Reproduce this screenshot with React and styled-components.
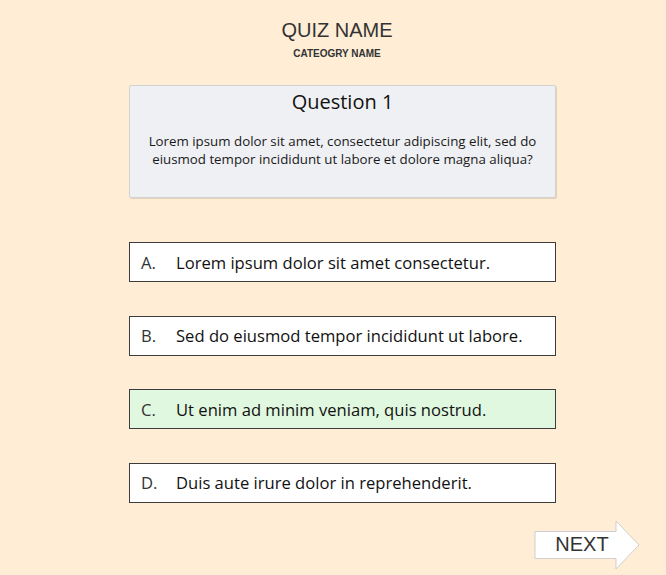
import React from 'react';
import styled, { createGlobalStyle } from 'styled-components';

const GlobalStyle = createGlobalStyle`
    html, body {
        margin: 0;
        padding: 0;
        background: #ffedd5;
    }
    body {
        font-family: 'Open Sans', 'Noto Sans', sans-serif;
        color: #1a1a1a;
    }
`;

const answers = [
    { letter: 'A.', text: 'Lorem ipsum dolor sit amet consectetur.' },
    { letter: 'B.', text: 'Sed do eiusmod tempor incididunt ut labore.' },
    { letter: 'C.', text: 'Ut enim ad minim veniam, quis nostrud.', selected: true },
    { letter: 'D.', text: 'Duis aute irure dolor in reprehenderit.' }
];

export default function App() {
    return (
        <Root>
            <GlobalStyle />
            <Header>
                <QuizName>QUIZ NAME</QuizName>
                <CategoryName>CATEOGRY NAME</CategoryName>
            </Header>
            <Column>
                <QuestionCard>
                    <QuestionTitle>Question 1</QuestionTitle>
                    <QuestionText>
                        Lorem ipsum dolor sit amet, consectetur adipiscing elit, sed do
                        eiusmod tempor incididunt ut labore et dolore magna aliqua?
                    </QuestionText>
                </QuestionCard>
                <Answers>
                    {answers.map(answer => (
                        <Answer key={answer.letter} selected={answer.selected}>
                            <Letter>{answer.letter}</Letter>
                            <span>{answer.text}</span>
                        </Answer>
                    ))}
                </Answers>
            </Column>
            <Footer>
                <NextButton>
                    <ArrowShape viewBox="0 0 106 50" width="106" height="50">
                        <path
                            d="M1 11.5 H82 V1 L105 25 L82 49 V38.5 H1 Z"
                            fill="#ffffff"
                            stroke="#cfcfcf"
                            strokeWidth="1"
                        />
                    </ArrowShape>
                    <NextLabel>NEXT</NextLabel>
                </NextButton>
            </Footer>
        </Root>
    );
}

const Root = styled.div`
    width: 666px;
    height: 575px;
    display: flex;
    flex-direction: column;
    overflow: hidden;
`;

const Header = styled.div`
    display: flex;
    flex-direction: column;
    align-items: center;
    padding-top: 19px;
    padding-left: 8px;
`;

const QuizName = styled.h1`
    margin: 0;
    font-family: 'Liberation Sans', Arial, sans-serif;
    font-weight: normal;
    font-size: 20px;
    line-height: 23px;
    color: #333;
`;

const CategoryName = styled.div`
    margin-top: 6px;
    font-family: 'Liberation Sans', Arial, sans-serif;
    font-weight: bold;
    font-size: 10px;
    line-height: 12px;
    color: #333;
`;

const Column = styled.div`
    width: 427px;
    margin-left: 129px;
    margin-top: 25px;
    display: flex;
    flex-direction: column;
`;

const QuestionCard = styled.div`
    height: 113px;
    box-sizing: border-box;
    background: #eff0f3;
    border: 1px solid #d2d2d2;
    border-radius: 2px;
    box-shadow: 1px 1px 1px rgba(0, 0, 0, 0.12);
    display: flex;
    flex-direction: column;
    align-items: center;
    padding: 2px 12px 0;
`;

const QuestionTitle = styled.h2`
    margin: 0;
    font-weight: normal;
    font-size: 20px;
    line-height: 27px;
    color: #111;
`;

const QuestionText = styled.p`
    margin: 18px 0 0;
    font-size: 13.3px;
    line-height: 17.5px;
    text-align: center;
    color: #1a1a1a;
`;

const Answers = styled.div`
    margin-top: 44px;
    display: flex;
    flex-direction: column;
    gap: 33.6px;
`;

const Answer = styled.div`
    height: 40px;
    box-sizing: border-box;
    border: 1px solid #3c3c3c;
    background: ${props => (props.selected ? '#e0f8df' : '#ffffff')};
    display: flex;
    align-items: center;
    padding-left: 11px;
    font-size: 16.6px;
    color: #111;
`;

const Letter = styled.span`
    width: 35px;
    flex-shrink: 0;
    color: #333;
`;

const Footer = styled.div`
    margin-top: 17px;
    display: flex;
    justify-content: flex-end;
    padding-right: 26px;
`;

const NextButton = styled.button`
    position: relative;
    width: 106px;
    height: 50px;
    padding: 0;
    border: none;
    background: transparent;
    cursor: pointer;
`;

const ArrowShape = styled.svg`
    display: block;
`;

const NextLabel = styled.span`
    position: absolute;
    left: 0;
    width: 96px;
    top: 13px;
    text-align: center;
    font-family: 'Liberation Sans', Arial, sans-serif;
    font-size: 20px;
    line-height: 23px;
    color: #333;
`;
